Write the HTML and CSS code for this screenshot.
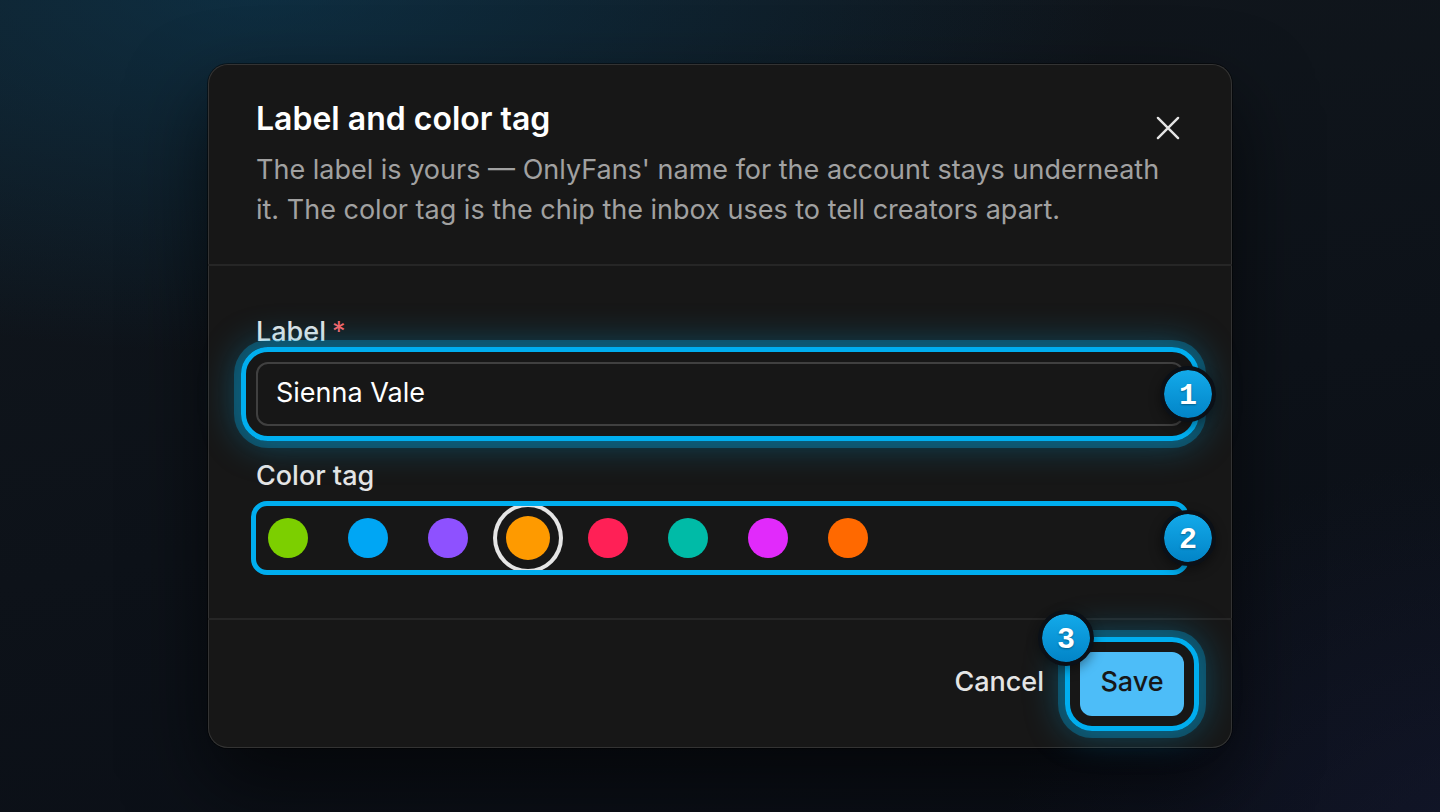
FILE: index.html
```html
<!DOCTYPE html>
<html lang="en">
<head>
<meta charset="utf-8">
<meta name="viewport" content="width=device-width, initial-scale=1">
<title>Label and color tag</title>
<link rel="stylesheet" href="styles.css">
</head>
<body>
<main class="stage">
  <form class="dialog" role="dialog" aria-labelledby="dialog-title" aria-describedby="dialog-text">
    <header class="dialog-header">
      <div class="title-row">
        <h1 class="title" id="dialog-title">Label and color tag</h1>
        <button class="close" type="button" aria-label="Close">
          <svg viewBox="0 0 32 32" width="32" height="32" fill="none" stroke="currentColor" stroke-width="2.4" stroke-linecap="round"><path d="M5.9 5.9 26.1 26.1M26.1 5.9 5.9 26.1"/></svg>
        </button>
      </div>
      <p class="description" id="dialog-text">The label is yours — OnlyFans' name for the account stays underneath it. The color tag is the chip the inbox uses to tell creators apart.</p>
    </header>
    <div class="dialog-body">
      <div class="field">
        <label class="field-label" for="label">Label<span class="required">*</span></label>
        <div class="spot spot-glow">
          <input class="text-input" id="label" type="text" value="Sienna Vale" required>
          <span class="badge badge-side">1</span>
        </div>
      </div>
      <div class="field">
        <span class="field-label" id="tag-label">Color tag</span>
        <div class="spot spot-tight">
          <div class="swatches" role="radiogroup" aria-labelledby="tag-label">
            <label class="cell"><input class="swatch lime" type="radio" name="tag" aria-label="Lime"></label>
            <label class="cell"><input class="swatch sky" type="radio" name="tag" aria-label="Sky"></label>
            <label class="cell"><input class="swatch violet" type="radio" name="tag" aria-label="Violet"></label>
            <label class="cell"><input class="swatch amber" type="radio" name="tag" aria-label="Amber" checked></label>
            <label class="cell"><input class="swatch rose" type="radio" name="tag" aria-label="Rose"></label>
            <label class="cell"><input class="swatch teal" type="radio" name="tag" aria-label="Teal"></label>
            <label class="cell"><input class="swatch fuchsia" type="radio" name="tag" aria-label="Fuchsia"></label>
            <label class="cell"><input class="swatch orange" type="radio" name="tag" aria-label="Orange"></label>
          </div>
          <span class="badge badge-side">2</span>
        </div>
      </div>
    </div>
    <footer class="dialog-footer">
      <button class="button" type="button">Cancel</button>
      <div class="spot spot-glow">
        <button class="button button-primary" type="submit">Save</button>
        <span class="badge badge-corner">3</span>
      </div>
    </footer>
  </form>
</main>
</body>
</html>
```
FILE: styles.css
```css
* { box-sizing: border-box; }

body {
  margin: 0;
  font-family: Inter, "Liberation Sans", sans-serif;
  font-size: 27px;
  line-height: 40px;
  color: #e5e5e5;
}

.stage {
  min-height: 100vh;
  display: flex;
  align-items: center;
  justify-content: center;
  padding: 64px 24px;
  overflow: hidden;
  background:
    radial-gradient(ellipse 860px 370px at 18% -2%, rgba(12, 62, 90, 0.6), rgba(14, 52, 70, 0) 100%),
    radial-gradient(ellipse 500px 420px at 104% 108%, rgba(26, 30, 62, 0.5), rgba(26, 30, 62, 0) 100%),
    linear-gradient(170deg, #11171d, #0d1219 55%, #0a0e16);
}

.dialog {
  width: 100%;
  max-width: 1024px;
  border-radius: 20px;
  background: #171717;
  box-shadow: inset 0 0 0 1px #333333, 0 0 0 1px rgba(0, 0, 0, 0.45), 0 36px 80px rgba(0, 0, 0, 0.6);
}

.dialog-header {
  padding: 38px 48px 34px;
  border-bottom: 2px solid #262626;
}

.title-row {
  display: flex;
  justify-content: space-between;
  align-items: flex-end;
  min-height: 42px;
  margin-bottom: 6px;
}

.title {
  margin: 0;
  align-self: flex-start;
  font-size: 32px;
  line-height: 34px;
  font-weight: 600;
  color: #ffffff;
}

.close {
  display: block;
  width: 32px;
  height: 32px;
  padding: 0;
  border: 0;
  background: none;
  color: #e5e5e5;
}

.close svg { display: block; }

.description {
  margin: 0;
  color: #a1a1a1;
}

.dialog-body {
  display: grid;
  gap: 30px;
  padding: 46px 48px 48px;
}

.field {
  display: grid;
  gap: 10px;
}

.field-label { font-weight: 500; }

.required {
  margin-left: 6px;
  font-weight: 400;
  color: #ff6467;
}

.spot { position: relative; }

.spot::after {
  content: "";
  position: absolute;
  border: 5px solid #00aeef;
  pointer-events: none;
}

.spot-glow::after {
  inset: -15px;
  border-radius: 27px;
  box-shadow: 0 0 0 7px rgba(0, 174, 239, 0.3), 0 0 36px 4px rgba(0, 174, 239, 0.35);
}

.spot-tight::after {
  inset: -5px;
  border-radius: 16px;
}

.text-input {
  display: block;
  width: 100%;
  height: 64px;
  padding: 0 18px 4px;
  border: 2px solid #404040;
  border-radius: 12px;
  background: transparent;
  font: inherit;
  color: #ffffff;
  outline: none;
}

.swatches {
  display: flex;
  gap: 16px;
  height: 64px;
  overflow: hidden;
}

.cell {
  display: grid;
  place-items: center;
  width: 64px;
  height: 64px;
}

.swatch {
  appearance: none;
  width: 40px;
  height: 40px;
  margin: 0;
  border-radius: 50%;
}

.swatch:checked {
  width: 44px;
  height: 44px;
  box-shadow: 0 0 0 9px #171717, 0 0 0 13px #e5e5e5;
}

.lime { background: #7ccf00; }
.sky { background: #00a6f4; }
.violet { background: #8e51ff; }
.amber { background: #fe9a00; }
.rose { background: #ff2056; }
.teal { background: #00bba7; }
.fuchsia { background: #e12afb; }
.orange { background: #ff6900; }

.badge {
  position: absolute;
  z-index: 1;
  width: 56px;
  height: 56px;
  border: 4px solid #0b1017;
  border-radius: 50%;
  background: linear-gradient(#13aaea, #0284c7) padding-box;
  box-shadow: 0 4px 12px rgba(0, 0, 0, 0.4);
  font-family: "Liberation Mono", monospace;
  font-size: 30px;
  font-weight: 700;
  line-height: 52px;
  text-align: center;
  color: #ffffff;
  text-shadow: 0 1px 2px rgba(0, 0, 0, 0.35);
}

.badge-side {
  top: 4px;
  right: -32px;
}

.badge-corner {
  top: -42px;
  left: -42px;
}

.dialog-footer {
  display: flex;
  justify-content: flex-end;
  gap: 16px;
  padding: 32px 48px;
  border-top: 2px solid #262626;
}

.button {
  display: block;
  min-width: 104px;
  height: 64px;
  padding: 0 20px 4px;
  border: 0;
  border-radius: 12px;
  background: none;
  font: inherit;
  font-weight: 500;
  color: #e5e5e5;
}

.button-primary {
  background: #4dbdf8;
  color: #171717;
}
```
